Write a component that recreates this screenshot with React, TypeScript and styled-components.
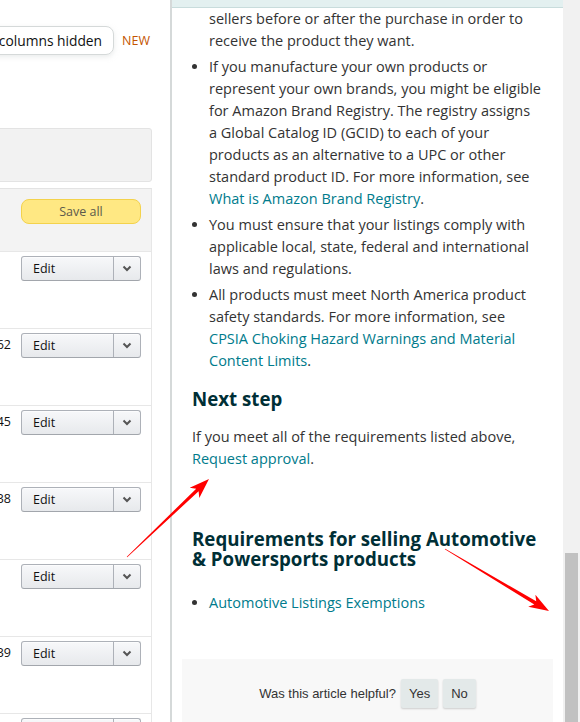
import React from "react";
import styled, { createGlobalStyle } from "styled-components";

const GlobalStyle = createGlobalStyle`
  html, body { margin: 0; padding: 0; background: #fff; }
  body { width: 580px; height: 722px; overflow: hidden; }
  #root { height: 722px; }
`;

const FONT = `"Open Sans", "Liberation Sans", Arial, sans-serif`;

const Screen = styled.div`
  position: relative;
  display: flex;
  width: 580px;
  height: 722px;
  overflow: hidden;
  font-family: ${FONT};
`;

/* ---------- left background page ---------- */
const LeftPage = styled.div`
  width: 170px;
  flex-shrink: 0;
  overflow: hidden;
  background: #fff;
`;

const Column = styled.div`
  width: 152px;
  display: flex;
  flex-direction: column;
  align-items: flex-end;
`;

const Toolbar = styled.div`
  margin-top: 26px;
  height: 29px;
  display: flex;
  align-items: center;
  gap: 8px;
  padding-right: 2px;
`;

const ColumnsPill = styled.div`
  flex-shrink: 0;
  height: 29px;
  box-sizing: border-box;
  display: flex;
  align-items: center;
  padding: 0 11px 0 40px;
  border: 1px solid #d5d9d9;
  border-radius: 8px;
  box-shadow: 0 2px 5px rgba(213, 217, 217, 0.5);
  font-size: 13.8px;
  color: #0f1111;
  white-space: nowrap;
`;

const NewTag = styled.span`
  font-size: 12.5px;
  color: #c45500;
`;

const FilterBox = styled.div`
  width: 600px;
  flex-shrink: 0;
  height: 54px;
  margin-top: 73px;
  box-sizing: border-box;
  background: #f2f2f2;
  border: 1px solid #e3e3e3;
  border-radius: 3px;
`;

const HeaderRow = styled.div`
  width: 600px;
  flex-shrink: 0;
  height: 64px;
  margin-top: 6px;
  box-sizing: border-box;
  display: flex;
  justify-content: flex-end;
  align-items: flex-start;
  padding: 10px 10px 0 0;
  background: #f3f3f3;
  border-top: 1px solid #e3e3e3;
  border-bottom: 1px solid #e7e7e7;
  border-right: 1px solid #e7e7e7;
`;

const SaveAll = styled.button`
  width: 120px;
  height: 25px;
  box-sizing: border-box;
  background: #ffe883;
  border: 1px solid #f3d24c;
  border-radius: 8px;
  font-family: ${FONT};
  font-size: 12.5px;
  color: #5c5a4c;
  padding: 0;
`;

const Row = styled.div`
  width: 600px;
  flex-shrink: 0;
  height: 77px;
  box-sizing: border-box;
  display: flex;
  justify-content: flex-end;
  align-items: flex-start;
  gap: 10px;
  padding: 4px 10px 0 0;
  border-bottom: 1px solid #e7e7e7;
  border-right: 1px solid #e7e7e7;
`;

const PriceCell = styled.div`
  width: 80px;
  text-align: right;
  padding-top: 2px;
  font-size: 12.5px;
  line-height: 19px;
  color: #111;
  white-space: nowrap;
`;

const EditSplit = styled.div`
  width: 120px;
  height: 25px;
  flex-shrink: 0;
  box-sizing: border-box;
  display: flex;
  border: 1px solid #adb1b8;
  border-bottom-color: #a2a6ac;
  border-radius: 3px;
  background: linear-gradient(to bottom, #f7f8fa, #e7e9ec);
  box-shadow: 0 1px 0 rgba(255, 255, 255, 0.6) inset;
`;

const EditLabel = styled.span`
  flex: 1;
  display: flex;
  align-items: center;
  padding-left: 11px;
  font-size: 12.5px;
  color: #111;
  border-right: 1px solid #adb1b8;
`;

const ChevronPart = styled.span`
  width: 26px;
  display: flex;
  align-items: center;
  justify-content: center;
`;

/* ---------- help panel ---------- */
const Panel = styled.div`
  flex: 1;
  display: flex;
  flex-direction: column;
  border-left: 2px solid #d5d9d9;
  background: #fff;
  overflow: hidden;
`;

const PanelStrip = styled.div`
  height: 7px;
  flex-shrink: 0;
  background: #e3f0f0;
  border-bottom: 1px solid #c8dcdc;
`;

const Article = styled.div`
  padding: 0 14px 0 20px;
  font-size: 14.5px;
  line-height: 22px;
  color: #333;
`;

const BulletList = styled.ul<{ $gap?: number }>`
  margin: ${(p) => p.$gap ?? 0}px 0 0;
  padding-left: 17px;
`;

const Item = styled.li<{ $continued?: boolean }>`
  margin-top: ${(p) => (p.$continued ? 0 : 4)}px;
  list-style: ${(p) => (p.$continued ? "none" : "disc")};
`;

const Link = styled.a`
  color: #007b8c;
  text-decoration: none;
`;

const Heading = styled.h3<{ $gap: number; $lh: number }>`
  margin: ${(p) => p.$gap}px 0 0;
  font-size: 18.7px;
  line-height: ${(p) => p.$lh}px;
  font-weight: 700;
  color: #002f36;
`;

const Para = styled.p`
  margin: 16px 0 0;
`;

const Feedback = styled.div`
  margin: 45px -4px 0 -10px;
  padding: 20px 0 30px;
  background: #f8f8f8;
  display: flex;
  justify-content: center;
  align-items: center;
  gap: 5px;
  font-family: "Liberation Sans", Arial, sans-serif;
  font-size: 13px;
  color: #333;
`;

const FeedbackButton = styled.button`
  height: 29px;
  padding: 0 8px;
  border: none;
  border-radius: 2px;
  background: #e3e9e9;
  box-shadow: 0 1px 2px rgba(0, 0, 0, 0.18);
  font-family: "Liberation Sans", Arial, sans-serif;
  font-size: 13px;
  color: #333;
`;

const Scrollbar = styled.div`
  width: 17px;
  flex-shrink: 0;
  display: flex;
  flex-direction: column;
  box-sizing: border-box;
  padding: 0 2px;
  background: #f1f1f1;
`;

const Thumb = styled.div<{ $top: number }>`
  margin-top: ${(p) => p.$top}px;
  flex: 1;
  background: #c1c1c1;
`;

const Overlay = styled.svg`
  position: absolute;
  left: 0;
  top: 0;
  pointer-events: none;
`;

function arrowPoints(x1: number, y1: number, x2: number, y2: number) {
  const dx = x2 - x1;
  const dy = y2 - y1;
  const L = Math.hypot(dx, dy);
  const ux = dx / L;
  const uy = dy / L;
  const nx = -uy;
  const ny = ux;
  const head = 20;
  const half = 7;
  const neck = 1.8;
  const tail = 0.3;
  const bx = x2 - ux * head;
  const by = y2 - uy * head;
  const cx = x2 - ux * (head - 4);
  const cy = y2 - uy * (head - 4);
  const pts = [
    [x1 + nx * tail, y1 + ny * tail],
    [cx + nx * neck, cy + ny * neck],
    [bx + nx * half, by + ny * half],
    [x2, y2],
    [bx - nx * half, by - ny * half],
    [cx - nx * neck, cy - ny * neck],
    [x1 - nx * tail, y1 - ny * tail],
  ];
  return pts.map((p) => p.map((v) => v.toFixed(1)).join(",")).join(" ");
}

const Chevron = () => (
  <svg width="10" height="7" viewBox="0 0 10 7">
    <path d="M1.5 1.5 L5 5 L8.5 1.5" fill="none" stroke="#555" strokeWidth="2" />
  </svg>
);

const prices = ["", "$18.62", "$22.45", "$19.38", "", "$14.39", "$31.15"];

export default function App() {
  return (
    <>
      <GlobalStyle />
      <Screen>
        <LeftPage>
          <Column>
            <Toolbar>
              <ColumnsPill>0 columns hidden</ColumnsPill>
              <NewTag>NEW</NewTag>
            </Toolbar>
            <FilterBox />
            <HeaderRow>
              <SaveAll>Save all</SaveAll>
            </HeaderRow>
            {prices.map((p, i) => (
              <Row key={i}>
                <PriceCell>{p}</PriceCell>
                <EditSplit>
                  <EditLabel>Edit</EditLabel>
                  <ChevronPart>
                    <Chevron />
                  </ChevronPart>
                </EditSplit>
              </Row>
            ))}
          </Column>
        </LeftPage>

        <Panel>
          <PanelStrip />
          <Article>
            <BulletList>
              <Item $continued>
                sellers before or after the purchase in order to
                <br />
                receive the product they want.
              </Item>
              <Item>
                If you manufacture your own products or
                <br />
                represent your own brands, you might be eligible
                <br />
                for Amazon Brand Registry. The registry assigns
                <br />
                a Global Catalog ID (GCID) to each of your
                <br />
                products as an alternative to a UPC or other
                <br />
                standard product ID. For more information, see
                <br />
                <Link>What is Amazon Brand Registry</Link>.
              </Item>
              <Item>
                You must ensure that your listings comply with
                <br />
                applicable local, state, federal and international
                <br />
                laws and regulations.
              </Item>
              <Item>
                All products must meet North America product
                <br />
                safety standards. For more information, see
                <br />
                <Link>
                  CPSIA Choking Hazard Warnings and Material
                  <br />
                  Content Limits
                </Link>
                .
              </Item>
            </BulletList>

            <Heading $gap={16} $lh={22}>Next step</Heading>
            <Para>
              If you meet all of the requirements listed above,
              <br />
              <Link>Request approval</Link>.
            </Para>

            <Heading $gap={59} $lh={20}>
              Requirements for selling Automotive
              <br />
              &amp; Powersports products
            </Heading>
            <BulletList $gap={23}>
              <Item>
                <Link>Automotive Listings Exemptions</Link>
              </Item>
            </BulletList>

            <Feedback>
              <span>Was this article helpful?</span>
              <FeedbackButton>Yes</FeedbackButton>
              <FeedbackButton>No</FeedbackButton>
            </Feedback>
          </Article>
        </Panel>

        <Scrollbar>
          <Thumb $top={553} />
        </Scrollbar>

        <Overlay width="580" height="722" viewBox="0 0 580 722">
          <polygon points={arrowPoints(127, 557, 209, 479)} fill="#ff0000" />
          <polygon points={arrowPoints(445, 549, 549, 611)} fill="#ff0000" />
        </Overlay>
      </Screen>
    </>
  );
}
